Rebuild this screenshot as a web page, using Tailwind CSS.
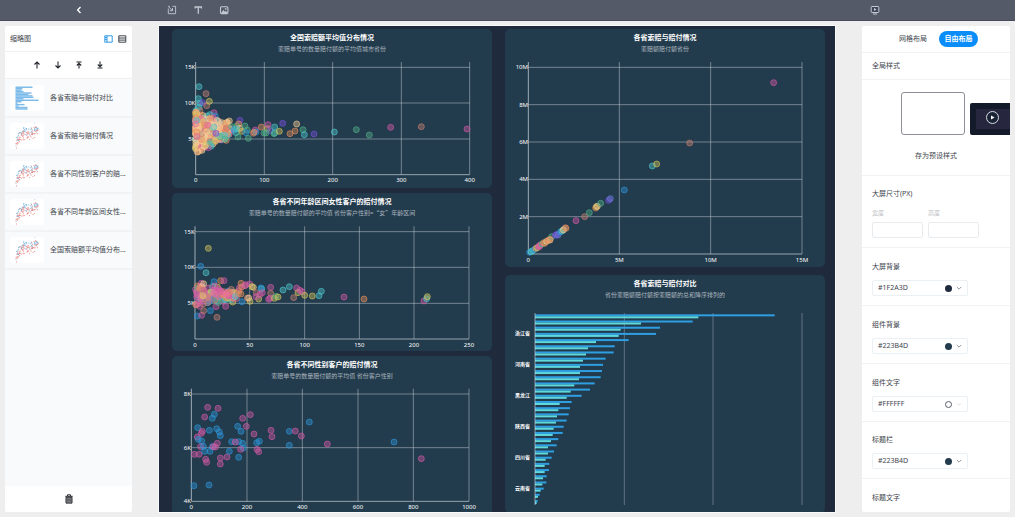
<!DOCTYPE html>
<html lang="zh-CN">
<head>
<meta charset="utf-8">
<title>大屏编辑器</title>
<script src="https://cdn.jsdelivr.net/npm/@tailwindcss/browser@4"></script>
</head>
<body class="flex h-screen flex-col overflow-hidden bg-[#eeeeee] font-['Noto_Sans','Noto_Sans_CJK_SC',sans-serif] text-[7px] leading-[10px] text-[#40454d]">

<header class="flex h-[21px] shrink-0 items-center border-b border-[#484b5a] bg-[#545a67] pr-[135px] pl-[75px] text-[#c3c9d3]">
  <button aria-label="返回" class="mr-[84px] text-white"><svg class="size-2" viewBox="0 0 8 8" fill="none" stroke="currentColor" stroke-width="1.3"><path d="M5.5 1 2.6 4l2.9 3"/></svg></button>
  <div class="flex items-center gap-4">
    <button aria-label="组件"><svg class="size-[10px]" viewBox="0 0 10 10" fill="none" stroke="currentColor" stroke-width=".9"><path d="M2.800 1.300H1.300M1.300 3.500v5.200h7.300V1.300H5.500M1.300 1.500l3.900 3.900M5.500 3v2.700H2.800"/></svg></button>
    <button aria-label="文本"><svg class="size-[10px]" viewBox="0 0 10 10" fill="none" stroke="currentColor" stroke-width="1.3"><path d="M2.200 3.400V2h6.200v1.400M5.300 2v6.800"/></svg></button>
    <button aria-label="图片"><svg class="size-[10px]" viewBox="0 0 10 10" fill="none" stroke="currentColor" stroke-width="1.100"><rect x="1.500" y="1.800" width="7.400" height="6.800" rx="1"/><path d="m2.200 8 2.100-3 1.600 1.700 1-1L8.600 8z" fill="currentColor" stroke="none"/><circle cx="6.700" cy="3.900" r=".8" fill="currentColor" stroke="none"/></svg></button>
  </div>
  <button aria-label="预览" class="ml-auto"><svg class="size-[10px]" viewBox="0 0 10 10" fill="none" stroke="currentColor"><rect x="1.200" y="1.500" width="7.600" height="6" rx=".8" fill="#3f4657"/><path d="M3 9h4" /><path d="m4 3 2.600 1.500L4 6z" fill="currentColor" stroke="none"/></svg></button>
</header>

<main class="flex min-h-0 flex-1 gap-[27px] px-[5px] pt-[5px] pb-[5px]">

  <aside class="flex w-[127px] shrink-0 flex-col overflow-hidden rounded-[2px] bg-white">
    <div class="flex h-[26px] shrink-0 items-center border-b border-[#eff1f2] px-[5px]">
      <h1>缩略图</h1>
      <button aria-label="缩略图视图" class="ml-auto text-[#2f9be8]"><svg class="h-[8px] w-[9px]" viewBox="0 0 9 8" fill="none" stroke="currentColor"><path d="M.8.8h7.400v6.400H.8zM3 .8v6.400M1 2.600h2M1 4.600h2"/></svg></button>
      <button aria-label="列表视图" class="ml-[5px]"><svg class="h-[8px] w-[9px]" viewBox="0 0 9 8" fill="none" stroke="currentColor"><path d="M.8.8h7v6.400h-7zM.8 3h7M.8 5.100h7"/></svg></button>
    </div>
    <div class="flex h-[27px] shrink-0 items-center justify-center gap-[13px] border-b border-[#eff1f2] text-[#22262c]">
      <button aria-label="上移一层"><svg class="size-2" viewBox="0 0 8 8" fill="none" stroke="currentColor" stroke-width="1.100"><path d="M4 7.500V1M1.500 3.500 4 1l2.500 2.500"/></svg></button>
      <button aria-label="下移一层"><svg class="size-2" viewBox="0 0 8 8" fill="none" stroke="currentColor" stroke-width="1.100"><path d="M4 .5V7M1.500 4.500 4 7l2.500-2.500"/></svg></button>
      <button aria-label="置顶"><svg class="size-2" viewBox="0 0 8 8" fill="none" stroke="currentColor" stroke-width="1.100"><path d="M4 7.500V2M1.800 4.500 4 2.200l2.200 2.300M1.500 1h5"/></svg></button>
      <button aria-label="置底"><svg class="size-2" viewBox="0 0 8 8" fill="none" stroke="currentColor" stroke-width="1.100"><path d="M4 .5V6M1.800 3.500 4 5.800l2.200-2.300M1.500 7h5"/></svg></button>
    </div>
    <ul class="flex-1 overflow-hidden bg-[#f8fafb] pt-px">
      <li><button class="flex h-[38px] w-full items-center gap-[6px] border-b-2 border-[#f1f3f4] pl-[5px]"><svg data-thumb="bar" class="h-[26px] w-[34px] shrink-0 rounded-[3px] bg-white" viewBox="0 0 34 26"></svg>各省索赔与赔付对比</button></li>
      <li><button class="flex h-[38px] w-full items-center gap-[6px] border-b-2 border-[#f1f3f4] pl-[5px]"><svg data-thumb="scatter" class="h-[26px] w-[34px] shrink-0 rounded-[3px] bg-white" viewBox="0 0 34 26"></svg>各省索赔与赔付情况</button></li>
      <li><button class="flex h-[38px] w-full items-center gap-[6px] border-b-2 border-[#f1f3f4] pl-[5px]"><svg data-thumb="scatter" class="h-[26px] w-[34px] shrink-0 rounded-[3px] bg-white" viewBox="0 0 34 26"></svg>各省不同性别客户的赔...</button></li>
      <li><button class="flex h-[38px] w-full items-center gap-[6px] border-b-2 border-[#f1f3f4] pl-[5px]"><svg data-thumb="scatter" class="h-[26px] w-[34px] shrink-0 rounded-[3px] bg-white" viewBox="0 0 34 26"></svg>各省不同年龄区间女性...</button></li>
      <li><button class="flex h-[38px] w-full items-center gap-[6px] border-b-2 border-[#f1f3f4] pl-[5px]"><svg data-thumb="scatter" class="h-[26px] w-[34px] shrink-0 rounded-[3px] bg-white" viewBox="0 0 34 26"></svg>全国索赔额平均值分布...</button></li>
    </ul>
    <div class="flex h-[26px] shrink-0 items-center justify-center">
      <button aria-label="删除"><svg class="h-[10px] w-[8px]" viewBox="0 0 8 10" fill="none" stroke="#2b2d33"><path d="M.3 2.300h7.400M2.500 2V.8h3V2"/><path d="M1 3.200h6v5.900H1z" fill="#8a8c92"/><path d="M3 4.500v3M5 4.500v3" stroke-width=".8"/></svg></button>
    </div>
  </aside>

  <section aria-label="画布" class="flex min-w-0 flex-1 items-start gap-[13px] overflow-hidden bg-[#1f2a3d] pt-[3px] pr-[10px] pl-[13px] outline outline-[#fafafa]">
    <div class="flex min-w-0 flex-1 flex-col gap-[5px]">
      <article class="overflow-hidden rounded-[5px] bg-[#223b4d]">
        <div class="h-[26px] pt-[4px] text-center"><h2 class="font-bold text-white">全国索赔额平均值分布情况</h2><p class="text-[6px] leading-[12px] text-[#aab5be]">索赔单号的数量赔付额的平均值城市省份</p></div>
        <svg id="city" class="block w-full" viewBox="36 105 960 399"></svg>
      </article>
      <article class="overflow-hidden rounded-[5px] bg-[#223b4d]">
        <div class="h-[26px] pt-[4px] text-center"><h2 class="font-bold text-white">各省不同年龄区间女性客户的赔付情况</h2><p class="font-['Noto_Sans_CJK_SC',sans-serif] text-[6px] leading-[12px] text-[#aab5be]">索赔单号的数量赔付额的平均值 省份客户性别=“女”年龄区间</p></div>
        <svg id="age" class="block w-full" viewBox="36 93 960 396"></svg>
      </article>
      <article class="overflow-hidden rounded-[5px] bg-[#223b4d]">
        <div class="h-[26px] pt-[4px] text-center"><h2 class="font-bold text-white">各省不同性别客户的赔付情况</h2><p class="text-[6px] leading-[12px] text-[#aab5be]">索赔单号的数量赔付额的平均值 省份客户性别</p></div>
        <svg id="gender" class="block w-full" viewBox="36 96 960 399"></svg>
      </article>
    </div>
    <div class="flex min-w-0 flex-1 flex-col gap-2">
      <article class="overflow-hidden rounded-[5px] bg-[#223b4d]">
        <div class="h-[26px] pt-[4px] text-center"><h2 class="font-bold text-white">各省索赔与赔付情况</h2><p class="text-[6px] leading-[12px] text-[#aab5be]">索赔额赔付额省份</p></div>
        <svg id="province" class="block w-full" viewBox="15 105 960 636"></svg>
      </article>
      <article class="overflow-hidden rounded-[5px] bg-[#223b4d]">
        <div class="h-[26px] pt-[4px] text-center"><h2 class="font-bold text-white">各省索赔与赔付对比</h2><p class="text-[6px] leading-[12px] text-[#aab5be]">省份索赔额赔付额按索赔额的总和降序排列的</p></div>
        <svg id="compare" class="block w-full" viewBox="15 93 960 636"></svg>
      </article>
    </div>
  </section>

  <aside class="w-[148px] shrink-0 overflow-hidden rounded-[2px] bg-white">
    <div class="flex h-[27px] items-center border-b border-[#f0f3f5] pl-[37px]">
      <button>网格布局</button>
      <button class="ml-[12px] h-4 w-[39px] rounded-full bg-[#0a8df8] font-bold text-white">自由布局</button>
    </div>
    <h2 class="flex h-[27px] items-center border-b border-[#f0f3f5] pl-[10px]">全局样式</h2>
    <div class="h-[96px] border-b border-[#f0f3f5] pt-[12px]">
      <div class="flex items-end gap-[5px] pl-[39px]">
        <button aria-label="浅色样式" class="h-[43px] w-[64px] shrink-0 rounded-[3px] border border-[#8d8f96] bg-white"></button>
        <button aria-label="深色样式" class="flex h-[32px] w-[64px] shrink-0 rounded-[2px] bg-[#131b2b] p-[6px]"><svg class="h-[20px] w-full bg-[#26273f]" viewBox="0 0 52 20"><circle cx="16.500" cy="8.500" r="6" fill="#1b2436" stroke="#d8dde2"/><path d="m15 6.500 3.500 2-3.500 2z" fill="#fff"/></svg></button>
      </div>
      <div class="mt-4 text-center"><button>存为预设样式</button></div>
    </div>
    <fieldset class="h-[72px] border-b border-[#f0f3f5] px-[10px] pt-[13px]">
      <legend class="float-left w-full">大屏尺寸(PX)</legend>
      <div class="clear-both flex gap-[5px] pt-[9px] text-[6px] text-[#b9bdc2]">
        <label class="w-[51px]">宽度<input class="mt-[4px] block h-4 w-full rounded-[2px] border border-[#e9ecef] px-1"></label>
        <label class="w-[51px]">高度<input class="mt-[4px] block h-4 w-full rounded-[2px] border border-[#e9ecef] px-1"></label>
      </div>
    </fieldset>
    <div class="h-[58px] border-b border-[#f0f3f5] px-[10px] pt-[14px]">
      <label for="c1">大屏背景</label>
      <div class="mt-2 flex h-4 w-[96px] items-center rounded-[2px] border border-[#ebf0f4] px-[5px]"><select id="c1" class="min-w-0 flex-1 appearance-none"><option>#1F2A3D</option></select><span class="size-[7px] rounded-full bg-[#1f2a3d]"></span><svg class="ml-[4px] size-[6px]" viewBox="0 0 6 6" fill="none" stroke="#8f959c"><path d="m.8 2 2.200 2.200L5.200 2"/></svg></div>
    </div>
    <div class="h-[58px] border-b border-[#f0f3f5] px-[10px] pt-[14px]">
      <label for="c2">组件背景</label>
      <div class="mt-2 flex h-4 w-[96px] items-center rounded-[2px] border border-[#ebf0f4] px-[5px]"><select id="c2" class="min-w-0 flex-1 appearance-none"><option>#223B4D</option></select><span class="size-[7px] rounded-full bg-[#223b4d]"></span><svg class="ml-[4px] size-[6px]" viewBox="0 0 6 6" fill="none" stroke="#8f959c"><path d="m.8 2 2.200 2.200L5.200 2"/></svg></div>
    </div>
    <div class="h-[58px] border-b border-[#f0f3f5] px-[10px] pt-[14px]">
      <label for="c3">组件文字</label>
      <div class="mt-2 flex h-4 w-[96px] items-center rounded-[2px] border border-[#ebf0f4] px-[5px]"><select id="c3" class="min-w-0 flex-1 appearance-none"><option>#FFFFFF</option></select><span class="size-[7px] rounded-full border border-[#5a5f66] bg-white"></span><svg class="ml-[4px] size-[6px]" viewBox="0 0 6 6" fill="none" stroke="#e2e5e8"><path d="m.8 2 2.200 2.200L5.200 2"/></svg></div>
    </div>
    <div class="h-[57px] border-b border-[#f0f3f5] px-[10px] pt-[13px]">
      <label for="c4">标题栏</label>
      <div class="mt-2 flex h-4 w-[96px] items-center rounded-[2px] border border-[#ebf0f4] px-[5px]"><select id="c4" class="min-w-0 flex-1 appearance-none"><option>#223B4D</option></select><span class="size-[7px] rounded-full bg-[#223b4d]"></span><svg class="ml-[4px] size-[6px]" viewBox="0 0 6 6" fill="none" stroke="#8f959c"><path d="m.8 2 2.200 2.200L5.200 2"/></svg></div>
    </div>
    <h3 class="px-[10px] pt-[14px]">标题文字</h3>
  </aside>
</main>

<script>
// Charts are drawn in a space of three units per CSS pixel.
const NS = 'http://www.w3.org/2000/svg';
const C = {b:'#2f96d8',t:'#4fc8cc',m:'#d35aa8',o:'#e8905a',s:'#c88070',y:'#d6c65c',g:'#54b088',p:'#7a50dc',c:'#f6cd92',k:'#e8719c',v:'#6f7fe0'};
let seed = 7;
const rnd = () => (seed = (seed * 16807) % 2147483647) / 2147483647;
function add(svg, tag, attrs, text) {
  const e = document.createElementNS(NS, tag);
  for (const k in attrs) e.setAttribute(k, attrs[k]);
  if (text) e.textContent = text;
  svg.appendChild(e);
}
function line(svg, x1, y1, x2, y2, o) {
  add(svg, 'line', {x1, y1, x2, y2, stroke: '#d5dee4', 'stroke-width': 3, 'stroke-opacity': o});
}
function label(svg, x, y, anchor, text, size) {
  add(svg, 'text', {x, y, 'text-anchor': anchor, 'dominant-baseline': 'central', fill: '#fff', 'font-size': size || 18, 'font-weight': size ? 700 : 400}, text);
}
function axes(svg, xs, ys, top) {
  const x0 = xs[0][0], x1 = xs[xs.length - 1][0], y0 = ys[0][0];
  ys.forEach(([y], i) => line(svg, x0, y, x1, y, i ? .45 : .65));
  xs.forEach(([x], i) => line(svg, x, top, x, y0, i ? .45 : .7));
  xs.forEach(([x, t]) => label(svg, x, y0 + 17, 'middle', t));
  ys.forEach(([y, t]) => t && label(svg, x0 - 1, y, 'end', t));
}
function dots(svg, data) {
  data.trim().split(/\s+/).forEach(d => {
    const [x, y, c] = d.split(',');
    dot(svg, x, y, C[c], .42);
  });
}
function dot(svg, cx, cy, color, o) {
  add(svg, 'circle', {cx, cy, r: 9, fill: color, 'fill-opacity': o, stroke: color, 'stroke-width': 2.5, 'stroke-opacity': o + .3});
}
// Dense group of readings that starts at x0 and thins out towards `reach`.
function cloud(svg, n, x0, power, yc, up, down, reach, palette) {
  for (let i = 0; i < n; i++) {
    const f = Math.pow(rnd(), power);
    const r = rnd() + rnd() - 1;
    dot(svg, x0 + f * reach, yc + r * (r < 0 ? up : down) * (1 - f * .6), C[palette[Math.floor(rnd() * palette.length)]], .42);
  }
}

const city = document.getElementById('city');
axes(city, [[107,'0'],[313,'100'],[518,'200'],[724,'300'],[929,'400']], [[464],[357,'5K'],[249,'10K'],[142,'15K']], 126);
dots(city, '117,200,t 138,221,s 115,236,t 119,250,t 128,248,p 140,257,s 148,244,y 117,262,t 120,272,s 162,278,m 150,284,t 166,288,b 160,294,m 240,301,p 183,312,p 170,306,b');
cloud(city, 80, 109, 1.7, 330, 60, 64, 105, 'tbkgtkpmt');
cloud(city, 180, 107, 2.2, 332, 64, 74, 105, 'occockycosctck');
dots(city, '118,393,o 126,391,c 113,396,c 145,383,m 133,378,c 138,374,y 152,366,g 166,362,y 195,357,g 180,350,g 168,340,p 196,312,o 208,303,c 200,325,s 215,320,g 222,330,b 230,318,g 236,312,o 240,325,c 228,338,t 230,326,t 245,334,y 234,351,g 255,318,g 262,330,g 258,338,b 265,355,g 286,330,m 280,340,s 288,336,b 282,337,o 304,321,o 322,326,y 324,314,m 330,332,p 312,339,g 318,339,g 344,321,t 344,339,t 342,341,g 358,334,y 368,310,p 390,341,o 405,333,o 410,312,c 429,329,g 433,344,t 462,342,p 523,336,t 589,329,g 628,345,g 692,322,m 784,320,s 921,327,m');

const age = document.getElementById('age');
axes(age, [[105,'0'],[269,'50'],[434,'100'],[598,'150'],[762,'200'],[927,'250']], [[453],[346,'5K'],[238,'10K'],[131,'15K']], 115);
dots(age, '145,181,y 122,235,b 138,254,t 162,281,b 182,278,o 192,278,m 124,286,m 112,294,o 172,297,y 112,384,b 125,382,m 131,368,s 151,368,b 171,388,s 197,355,m 168,356,m 119,355,m 188,340,m 218,342,y');
cloud(age, 42, 107, 1, 322, 42, 44, 110, 'btmtbg');
cloud(age, 62, 107, 1.100, 320, 40, 40, 125, 'omkcmymosk');
dots(age, '214,304,s 226,326,t 237,308,o 243,286,o 238,300,m 245,297,o 255,293,k 269,288,m 236,316,s 246,341,b 257,290,m 280,298,c 276,296,y 243,318,o 262,330,s 270,340,y 266,330,c 289,314,s 296,333,y 305,302,t 303,300,b 288,326,m 300,320,m 307,314,m 332,298,m 332,316,s 330,331,m 326,334,m 343,331,y 348,325,g 354,327,y 369,306,t 388,296,t 401,329,s 410,300,m 414,314,y 420,307,m 426,311,m 434,322,y 457,324,y 477,323,t 484,310,t 552,327,m 612,333,o 792,339,m 800,332,t 802,326,y');

const gender = document.getElementById('gender');
axes(gender, [[94,'0'],[261,'200'],[427,'400'],[594,'600'],[760,'800'],[927,'1000']], [[454,'4K'],[293,'6K'],[132,'8K']], 116);
dots(gender, '143,172,m 174,175,m 163,193,b 157,205,b 134,201,m 271,194,m 248,205,m 113,233,b 148,241,b 170,236,b 127,244,m 124,250,m 112,261,m 178,246,b 181,257,b 115,268,b 125,273,b 233,229,b 259,229,m 243,244,b 282,252,m 333,241,m 336,260,m 388,244,b 406,243,m 448,216,b 424,258,m 388,286,b 502,282,m 702,276,b 784,326,m 122,290,m 130,289,b 134,304,b 150,304,b 157,290,b 172,280,m 166,291,m 160,290,m 103,313,m 117,313,m 137,328,m 140,337,m 181,324,m 201,321,m 181,342,m 208,304,b 236,322,b 215,275,b 236,275,b 226,276,m 248,280,b 250,294,b 242,298,m 290,278,b 298,274,b 291,298,m 296,305,m 102,407,b 147,405,b');

const province = document.getElementById('province');
axes(province, [[85,'0'],[358,'5M'],[632,'10M'],[906,'15M']], [[702],[590,'2M'],[478,'4M'],[366,'6M'],[254,'8M'],[142,'10M']], 126);
dots(province, '89,697,b 93,695,t 98,692,t 104,688,b 108,685,o 112,683,y 116,679,m 121,675,k 118,680,m 126,672,g 131,668,o 134,670,o 140,664,c 145,661,o 150,660,c 155,650,g 150,658,o 166,646,p 171,643,p 174,645,v 181,636,b 186,633,t 191,628,g 196,623,s 190,630,c 198,625,o 228,602,m 254,590,s 268,578,g 287,564,o 289,560,y 292,559,c 302,550,g 326,541,p 331,536,v 373,510,b 457,438,t 470,432,y 569,369,s 821,188,m');

const compare = document.getElementById('compare');
const claims = [824,578,480,468,386,344,341,317,309,306,302,284,270,245,215,210,206,200,191,188,175,170,162,155,148,147,140,139,131,119,113];
const paid = [595,423,362,356,288,264,258,249,240,240,237,223,212,200,179,175,171,168,161,158,153,144,144,137,134,134,129,127,122,114,110];
[373,639,906].forEach(x => line(compare, x, 129, x, 705, .35));
claims.forEach((x, i) => {
  const y = 133 + i * 18.57;
  add(compare, 'rect', {x: 105, y, width: x - 105, height: 6, fill: '#2f9fe2'});
  add(compare, 'rect', {x: 105, y: y + 6, width: paid[i] - 105, height: 6, fill: '#5fd9dc'});
});
line(compare, 105, 129, 105, 705, .6);
['浙江省','河南省','黑龙江','陕西省','四川省','云南省'].forEach((t, i) => label(compare, 90, 190 + i * 92.8, 'end', t, 15));

document.querySelectorAll('[data-thumb=bar]').forEach(s => {
  [17,7,6,8,16,13,17,18,8,23,6,2,9,3,12,12].forEach((w, i) => add(s, 'rect', {x: 5.5, y: 1.500 + i * 1.450, width: w, height: 1.450, fill: '#7cbbea'}));
});
// Both series climb from the lower left; the red one lies below the blue one.
document.querySelectorAll('[data-thumb=scatter]').forEach(s => {
  seed = 41;
  for (let i = 0; i < 130; i++) {
    const t = rnd(), blue = rnd() < .5;
    const x = 6 + t * 22;
    const y = (blue ? 14 : 18) - 9 * Math.sqrt(t) + (rnd() + rnd() - 1) * 6 + (t < .15 ? 4 : 0);
    add(s, 'circle', {cx: x, cy: y, r: .6, fill: blue ? '#7ab6df' : '#e8827c', 'fill-opacity': .8});
  }
});
</script>
</body>
</html>
